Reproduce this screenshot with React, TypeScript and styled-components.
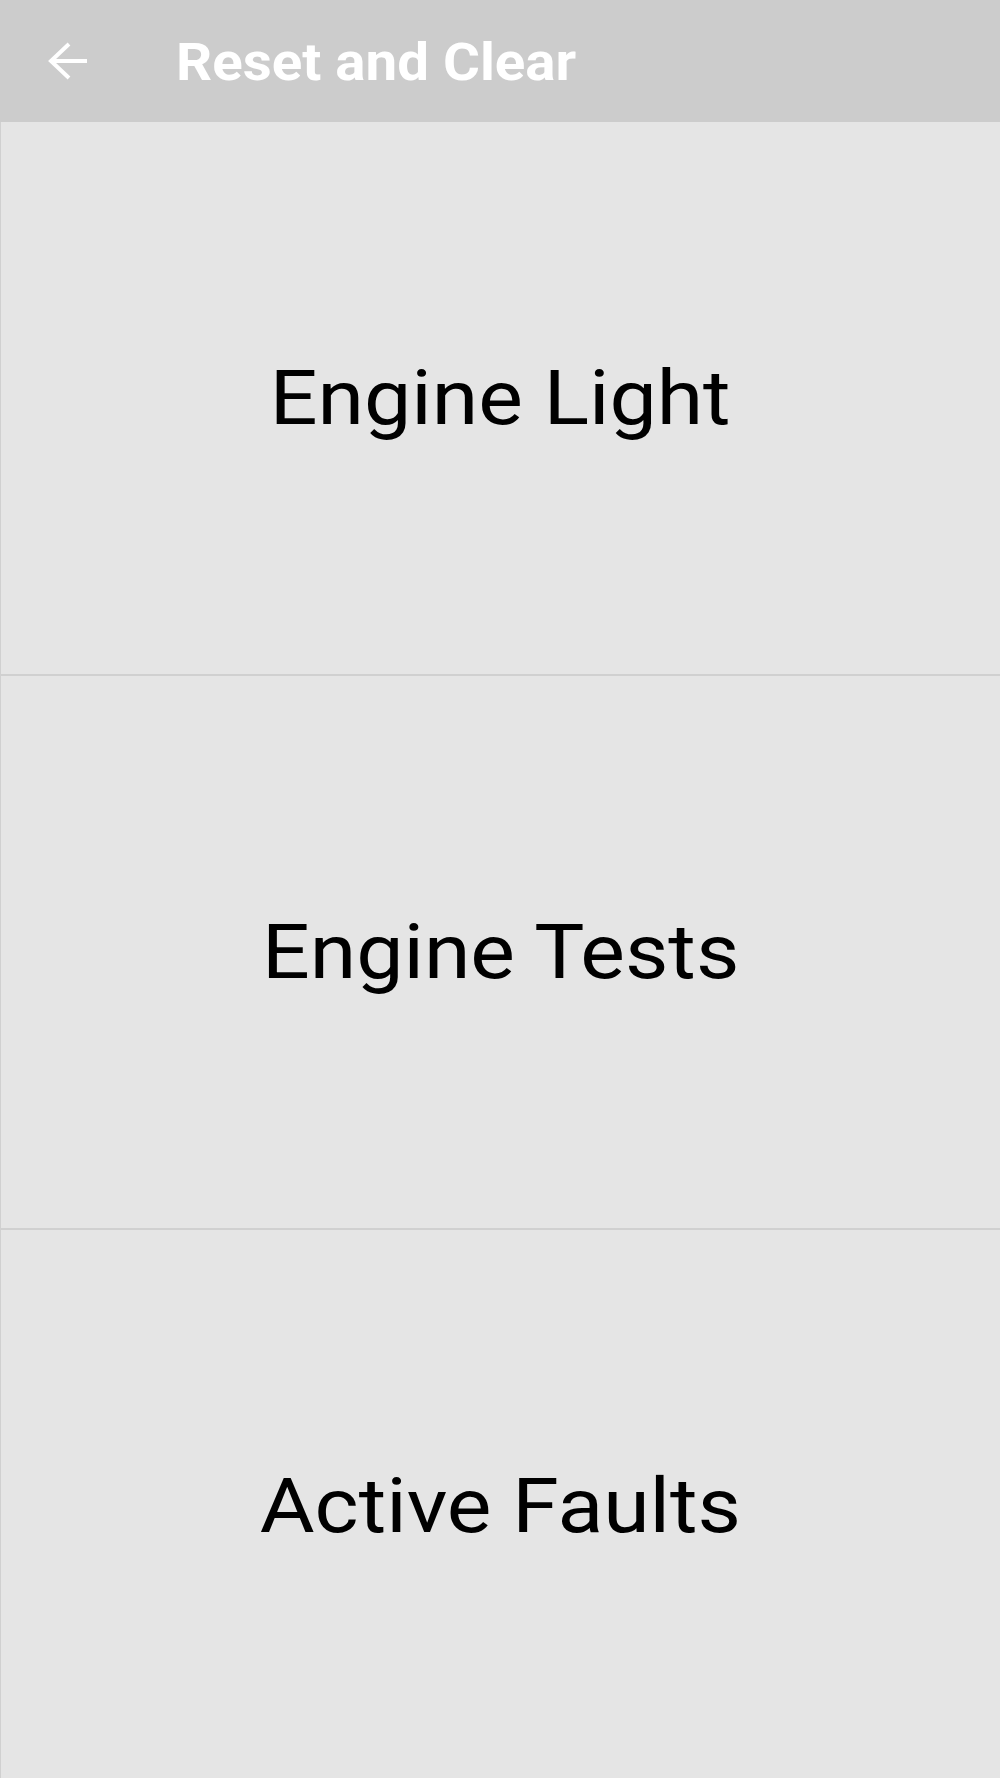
import React from "react";
import styled, { createGlobalStyle } from "styled-components";

const GlobalStyle = createGlobalStyle`
  html, body {
    margin: 0;
    padding: 0;
    background: #e5e5e5;
    font-family: Roboto, "Liberation Sans", sans-serif;
  }
`;

const items = ["Engine Light", "Engine Tests", "Active Faults"];

// the screen text is a bit wider than stock Roboto
const STRETCH = 1.107;

const BackArrow = () => (
  <svg width="40" height="38" viewBox="0 0 40 38" fill="none">
    <path
      d="M3 19H40M22 2L4 19L22 36"
      stroke="#ffffff"
      strokeWidth="4"
      strokeLinejoin="miter"
    />
  </svg>
);

const App = () => {
  return (
    <>
      <GlobalStyle />
      <Page>
        <Toolbar>
          <BackButton>
            <BackArrow />
          </BackButton>
          <Title>Reset and Clear</Title>
        </Toolbar>
        {items.map(label => (
          <MenuRow key={label}>
            <RowLabel>{label}</RowLabel>
          </MenuRow>
        ))}
      </Page>
    </>
  );
};

const Page = styled.div`
  width: 1000px;
  height: 1778px;
  overflow: hidden;
  display: flex;
  flex-direction: column;
`;

const Toolbar = styled.div`
  height: 122px;
  flex-shrink: 0;
  background: #cccccc;
  display: flex;
  align-items: center;
`;

const BackButton = styled.div`
  width: 176px;
  padding-left: 47px;
  box-sizing: border-box;
  display: flex;
  align-items: center;
`;

const Title = styled.h1`
  margin: 0;
  padding-top: 3px;
  color: #ffffff;
  font-family: Roboto, "Liberation Sans", sans-serif;
  font-weight: 700;
  font-size: 51px;
  transform: scaleX(${STRETCH});
  transform-origin: left center;
`;

const MenuRow = styled.div`
  height: 552px;
  flex-shrink: 0;
  background: #e5e5e5;
  border-left: 1px solid #d0d0d0;
  border-bottom: 2px solid #d0d0d0;
  display: flex;
  align-items: center;
  justify-content: center;
`;

const RowLabel = styled.span`
  color: #000000;
  font-family: Roboto, "Liberation Sans", sans-serif;
  font-size: 76px;
  font-weight: 400;
  transform: scaleX(${STRETCH});
`;

export default App;
